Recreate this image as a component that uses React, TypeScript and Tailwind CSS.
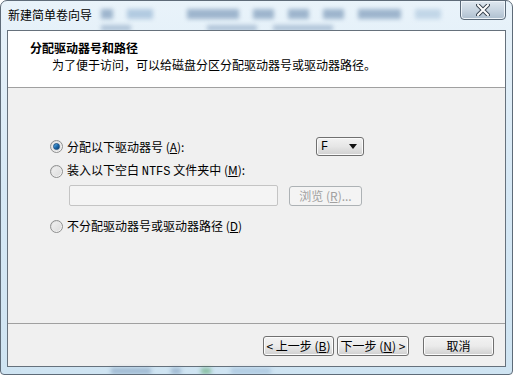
import React from "react";

const cjk = { fontFamily: '"Noto Sans CJK SC", "Liberation Sans", sans-serif' };
const mono = { fontFamily: '"Liberation Mono", monospace' };

function Radio({ checked }: { checked?: boolean }) {
  return (
    <span className="w-[13px] h-[13px] rounded-full border border-[#8e8f8f] bg-gradient-to-br from-[#d8d8d8] to-[#fafafa] flex items-center justify-center shrink-0">
      <span className="w-[9px] h-[9px] rounded-full bg-gradient-to-br from-[#f0f0f0] to-[#dcdcdc] flex items-center justify-center">
        {checked && <span className="w-[7px] h-[7px] rounded-full bg-gradient-to-br from-[#5fb4e8] via-[#1f6fb2] to-[#0d3a6b] border border-[#1a4f82]" />}
      </span>
    </span>
  );
}

function Btn({ children, w, disabled }: { children: React.ReactNode; w: string; disabled?: boolean }) {
  return (
    <div
      className={`${w} h-[20px] rounded-[3px] border flex items-center justify-center text-[12px] ${
        disabled
          ? "border-[#adb2b5] bg-[#f4f4f4] text-[#a0a0a0]"
          : "border-[#707070] bg-gradient-to-b from-[#f2f2f2] via-[#ebebeb] to-[#cfcfcf] text-black shadow-[inset_0_0_0_1px_#fcfcfc]"
      }`}
    >
      {children}
    </div>
  );
}

export default function App() {
  return (
    <div className="w-[513px] h-[375px] bg-white" style={cjk}>
      <div className="relative w-[513px] h-[375px] rounded-t-[7px] rounded-b-[4px] border border-[#5e6b78] bg-gradient-to-b from-[#e9f3fa] via-[#d6e8f5] to-[#cfe4f2] overflow-hidden flex flex-col">
        {/* blurred background behind glass */}
        <div className="absolute left-[100px] top-[8px] w-[340px] h-[10px] flex gap-[14px] blur-[2px] opacity-60">
          <span className="w-[14px] bg-[#6d8db0]" />
          <span className="w-[30px] bg-[#8fb0d0]" />
          <span className="w-[60px] ml-[20px] bg-[#6d8db0]" />
          <span className="w-[24px] bg-[#6d8db0]" />
          <span className="w-[24px] bg-[#6d8db0]" />
          <span className="w-[24px] bg-[#6d8db0]" />
          <span className="w-[50px] bg-[#6d8db0]" />
          <span className="w-[30px] bg-[#a9c4dc]" />
        </div>
        <div className="absolute left-[100px] top-[24px] w-[300px] h-[6px] flex gap-[16px] blur-[2px] opacity-50">
          <span className="w-[30px] bg-[#7b98b8]" />
          <span className="w-[50px] ml-[60px] bg-[#7b98b8]" />
          <span className="w-[60px] bg-[#7b98b8]" />
        </div>

        {/* title bar */}
        <div className="relative h-[29px] flex items-start shrink-0">
          <span className="pl-[7px] pt-[6px] text-[12px] leading-[16px] text-black">新建简单卷向导</span>
          <div className="ml-auto mr-[6px] w-[46px] h-[20px] -mt-px rounded-b-[4px] border border-[#5b6a79] bg-gradient-to-b from-[#dfe8f0] via-[#c8d5e1] to-[#aebfcf] shadow-[inset_0_0_0_1px_#eef4f9] flex items-center justify-center">
            <svg width="14" height="12" viewBox="0 0 14 12">
              <path d="M2 1 L12 11 M12 1 L2 11" stroke="#3b4652" strokeWidth="4" strokeLinecap="round" />
              <path d="M2 1 L12 11 M12 1 L2 11" stroke="#ffffff" strokeWidth="2" strokeLinecap="round" />
            </svg>
          </div>
        </div>

        {/* client area */}
        <div className="relative ml-[6px] w-[499px] h-[337px] border border-[#66717c] bg-[#f0f0f0] flex flex-col text-[12px] text-black">
          {/* header */}
          <div className="h-[57px] bg-white border-b border-[#a0a0a0] pl-[22px] pt-[9px] shrink-0">
            <div className="font-bold leading-[16px]">分配驱动器号和路径</div>
            <div className="pl-[22px] leading-[16px] mt-[1px]">为了便于访问，可以给磁盘分区分配驱动器号或驱动器路径。</div>
          </div>

          {/* body */}
          <div className="h-[236px] border-b border-[#a0a0a0] pl-[42px] pt-[49px] shrink-0">
            <div className="flex items-center h-[19px]">
              <Radio checked />
              <span className="ml-[4px] leading-[16px]">
                分配以下驱动器号 (<span className="underline">A</span>):
              </span>
              <div className="ml-auto mr-[141px] w-[48px] h-[19px] rounded-[3px] border border-[#707070] bg-gradient-to-b from-[#f2f2f2] via-[#e6e6e6] to-[#d0d0d0] shadow-[inset_0_0_0_1px_#fafafa] flex items-center pl-[4px] pr-[6px]">
                <span className="text-[12px]" style={mono}>F</span>
                <svg className="ml-auto" width="8" height="5" viewBox="0 0 8 5">
                  <path d="M0 0 H8 L4 5 Z" fill="#111" />
                </svg>
              </div>
            </div>
            <div className="flex items-center h-[16px] mt-[7px]">
              <Radio />
              <span className="ml-[4px] leading-[16px]">
                装入以下空白 <span style={mono}>NTFS</span> 文件夹中 (<span className="underline">M</span>):
              </span>
            </div>
            <div className="flex items-center mt-[6px] ml-[19px] gap-[11px]">
              <div className="w-[209px] h-[21px] border border-[#c4c4c4] rounded-[2px] bg-[#f4f4f4]" />
              <Btn w="w-[73px]" disabled>
                浏览 (<span className="underline">R</span>)...
              </Btn>
            </div>
            <div className="flex items-center h-[16px] mt-[12px]">
              <Radio />
              <span className="ml-[4px] leading-[16px]">
                不分配驱动器号或驱动器路径 (<span className="underline">D</span>)
              </span>
            </div>
          </div>

          {/* footer */}
          <div className="flex items-start pt-[12px] pr-[11px] justify-end">
            <Btn w="w-[71px]">
              &lt; 上一步 (<span className="underline">B</span>)
            </Btn>
            <div className="ml-[3px]">
              <Btn w="w-[72px]">
                下一步 (<span className="underline">N</span>) &gt;
              </Btn>
            </div>
            <div className="ml-[14px]">
              <Btn w="w-[71px]">取消</Btn>
            </div>
          </div>
        </div>

        {/* bottom frame glass hint */}
        <div className="absolute left-[110px] bottom-0 w-[200px] h-[6px] flex gap-[20px] blur-[2px] opacity-50">
          <span className="w-[40px] bg-[#6d8db0]" />
          <span className="w-[10px] bg-[#6d8db0]" />
          <span className="w-[10px] bg-[#3f9a4f]" />
          <span className="w-[40px] bg-[#8fb0d0]" />
        </div>
      </div>
    </div>
  );
}
